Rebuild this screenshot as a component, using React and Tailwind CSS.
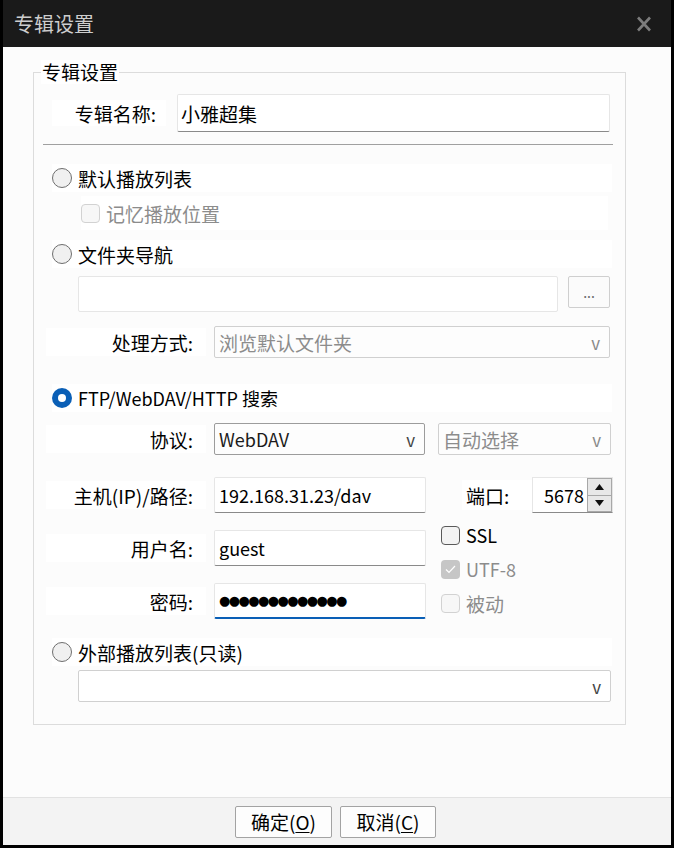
import React from 'react';

const font = "font-['Microsoft_YaHei','Noto_Sans_CJK_SC',sans-serif]";

const Radio = ({ checked, label, latin }) => (
  <div className="flex h-[28px] items-center bg-white">
    {checked ? (
      <div className="flex h-[20px] w-[20px] items-center justify-center rounded-full bg-[#0a5fb6]">
        <div className="h-[8px] w-[8px] rounded-full bg-white" />
      </div>
    ) : (
      <div className="h-[20px] w-[20px] rounded-full border border-[#6e6e6e] bg-[#f0f0f0]" />
    )}
    <span className={`ml-[6px] leading-none text-black ${latin ? 'text-[18px]' : 'text-[19px]'}`}>{label}</span>
  </div>
);

const Check = ({ label, disabled, checked, latin }) => (
  <div className="flex h-[34px] items-center">
    {checked ? (
      <div className="flex h-[19px] w-[19px] items-center justify-center rounded-[4px] bg-[#c6c6c6]">
        <svg width="11" height="9" viewBox="0 0 11 9" fill="none">
          <path d="M1 4.5 L4 7.5 L10 1" stroke="white" strokeWidth="1.2" />
        </svg>
      </div>
    ) : (
      <div
        className={
          disabled
            ? 'h-[19px] w-[19px] rounded-[4px] border border-[#d2d2d2] bg-[#f7f7f7]'
            : 'h-[19px] w-[19px] rounded-[4px] border border-[#5a5a5a] bg-[#f3f3f3]'
        }
      />
    )}
    <span
      className={`ml-[6px] leading-none ${latin ? 'text-[18px]' : 'text-[19px]'} ${
        disabled ? 'text-[#8c8c8c]' : 'text-black'
      }`}
    >
      {label}
    </span>
  </div>
);

const Select = ({ value, width, disabled, dark, latin }) => (
  <div
    className={`flex h-[32px] items-center justify-between rounded-[2px] border bg-[#fdfdfd] pl-[4px] pr-[9px] ${
      dark ? 'border-[#9c9c9c]' : 'border-[#d0d0d0]'
    } ${width}`}
  >
    <span
      className={`leading-none ${latin ? 'text-[18px]' : 'text-[19px]'} ${
        disabled ? 'text-[#8c8c8c]' : 'text-[#1a1a1a]'
      }`}
    >
      {value}
    </span>
    <span className={`text-[17px] leading-none ${disabled ? 'text-[#8a8a8a]' : 'text-[#444]'}`}>v</span>
  </div>
);

const TextBox = ({ children, width, focused }) => (
  <div
    className={`flex h-[36px] items-center rounded-[2px] border border-[#e6e6e6] bg-white pl-[4px] ${
      focused ? 'border-b-2 border-b-[#0a5fb6]' : 'border-b-[#8a8a8a]'
    } ${width}`}
  >
    {children}
  </div>
);

const FieldLabel = ({ children }) => (
  <div className="ml-[12px] flex h-[28px] w-[160px] items-center justify-end bg-white pr-[13px]">
    <span className="text-[19px] leading-none text-black">{children}</span>
  </div>
);

export default function App() {
  return (
    <div className={`flex h-[848px] w-[674px] flex-col bg-black px-[3px] pb-[3px] ${font}`}>
      {/* Title bar */}
      <div className="flex h-[47px] items-center justify-between bg-[#1a1a1a] pl-[11px] pr-[19px]">
        <span className="text-[20px] text-[#cdcdcd]">专辑设置</span>
        <svg width="16" height="16" viewBox="0 0 16 16">
          <path d="M2 1.5 L14 14.5 M14 1.5 L2 14.5" stroke="#7c7c7c" strokeWidth="2.6" />
        </svg>
      </div>

      {/* Body */}
      <div className="flex-1 bg-[#fcfcfc] pl-[30px] pt-[13px]">
        <fieldset className="w-[593px] border border-[#dcdcdc] px-0 pt-0 pb-[22px]">
          <legend className="ml-[7px] bg-white px-[1px] text-[19px] leading-[24px] text-black">专辑设置</legend>

          {/* Album name */}
          <div className="mt-[10px] flex items-center">
            <div className="ml-[18px] flex h-[26px] w-[114px] items-center justify-end bg-white pr-[10px]">
              <span className="text-[19px] leading-none text-black">专辑名称:</span>
            </div>
            <div className="ml-[11px] flex h-[38px] w-[433px] items-center rounded-[2px] border border-[#e6e6e6] border-b-[#8a8a8a] bg-white pl-[3px]">
              <span className="text-[19px] leading-none text-black">小雅超集</span>
            </div>
          </div>

          <div className="ml-[9px] mt-[12px] h-px w-[570px] bg-[#a0a0a0]" />

          {/* Default playlist */}
          <div className="ml-[18px] mt-[19px] w-[560px]">
            <Radio label="默认播放列表" />
          </div>
          <div className="ml-[47px] mt-[4px] w-[527px] bg-white">
            <Check label="记忆播放位置" disabled />
          </div>

          {/* Folder navigation */}
          <div className="ml-[18px] mt-[10px] w-[560px]">
            <Radio label="文件夹导航" />
          </div>
          <div className="ml-[44px] mt-[8px] flex items-start">
            <div className="h-[36px] w-[480px] rounded-[2px] border border-[#e6e6e6] bg-white" />
            <div className="ml-[10px] flex h-[32px] w-[42px] items-center justify-center rounded-[2px] border border-[#cfcfcf] bg-[#fbfbfb]">
              <span className="text-[14px] leading-none text-[#6a6a6a]">...</span>
            </div>
          </div>
          <div className="mt-[14px] flex items-center">
            <FieldLabel>处理方式:</FieldLabel>
            <div className="ml-[8px]">
              <Select value="浏览默认文件夹" width="w-[396px] h-[31px]" disabled />
            </div>
          </div>

          {/* FTP / WebDAV / HTTP */}
          <div className="ml-[18px] mt-[26px] w-[560px]">
            <Radio checked latin label="FTP/WebDAV/HTTP 搜索" />
          </div>
          <div className="mt-[11px] flex items-center">
            <FieldLabel>协议:</FieldLabel>
            <div className="ml-[8px]">
              <Select value="WebDAV" width="w-[211px]" dark latin />
            </div>
            <div className="ml-[13px]">
              <Select value="自动选择" width="w-[173px]" disabled />
            </div>
          </div>
          <div className="mt-[22px] flex items-center">
            <FieldLabel>主机(IP)/路径:</FieldLabel>
            <div className="ml-[8px]">
              <TextBox width="w-[212px]">
                <span className="text-[18px] leading-none text-black">192.168.31.23/dav</span>
              </TextBox>
            </div>
            <div className="ml-[36px] flex h-[30px] w-[70px] items-center bg-white pl-[4px]">
              <span className="text-[19px] leading-none text-black">端口:</span>
            </div>
            <div className="flex h-[36px] w-[81px] items-stretch border border-[#e6e6e6] border-b-[#8a8a8a] bg-white">
              <div className="flex flex-1 items-center justify-end pr-[3px]">
                <span className="text-[18px] leading-none text-black">5678</span>
              </div>
              <div className="flex w-[25px] flex-col">
                <div className="flex flex-1 items-center justify-center border border-[#a8a8a8] bg-[#e8e8e8]">
                  <svg width="9" height="6" viewBox="0 0 9 6"><path d="M4.5 0 L9 6 L0 6 Z" fill="#111" /></svg>
                </div>
                <div className="flex flex-1 items-center justify-center border border-t-0 border-[#a8a8a8] bg-[#e8e8e8]">
                  <svg width="9" height="6" viewBox="0 0 9 6"><path d="M0 0 L9 0 L4.5 6 Z" fill="#111" /></svg>
                </div>
              </div>
            </div>
          </div>

          <div className="mt-[5px] flex items-start">
            <div className="flex flex-col gap-[17px] pt-[12px]">
              <div className="flex items-center">
                <FieldLabel>用户名:</FieldLabel>
                <div className="ml-[8px]">
                  <TextBox width="w-[212px]">
                    <span className="text-[18px] leading-none text-black">guest</span>
                  </TextBox>
                </div>
              </div>
              <div className="flex items-center">
                <FieldLabel>密码:</FieldLabel>
                <div className="ml-[8px]">
                  <TextBox width="w-[212px]" focused>
                    <span className="font-['DejaVu_Sans',sans-serif] text-[13px] leading-none tracking-[-1.6px] text-black">
                      ●●●●●●●●●●●●●
                    </span>
                  </TextBox>
                </div>
              </div>
            </div>
            <div className="ml-[15px] flex w-[170px] flex-col">
              <Check label="SSL" latin />
              <Check label="UTF-8" latin disabled checked />
              <Check label="被动" disabled />
            </div>
          </div>

          {/* External playlist */}
          <div className="ml-[18px] mt-[18px] w-[560px]">
            <Radio label="外部播放列表(只读)" />
          </div>
          <div className="ml-[44px] mt-[4px]">
            <Select value="" width="w-[533px] bg-white" />
          </div>
        </fieldset>
      </div>

      {/* Footer */}
      <div className="flex h-[48px] items-center justify-center gap-[8px] border-t border-[#e2e2e2] bg-[#f3f3f3] pr-[3px]">
        <div className="flex h-[32px] w-[97px] items-center justify-center rounded-[2px] border border-[#a3a3a3] bg-[#fdfdfd]">
          <span className="text-[19px] leading-none text-black">
            确定(<span className="underline underline-offset-2">O</span>)
          </span>
        </div>
        <div className="flex h-[32px] w-[96px] items-center justify-center rounded-[2px] border border-[#a3a3a3] bg-[#fdfdfd]">
          <span className="text-[19px] leading-none text-black">
            取消(<span className="underline underline-offset-2">C</span>)
          </span>
        </div>
      </div>
    </div>
  );
}
